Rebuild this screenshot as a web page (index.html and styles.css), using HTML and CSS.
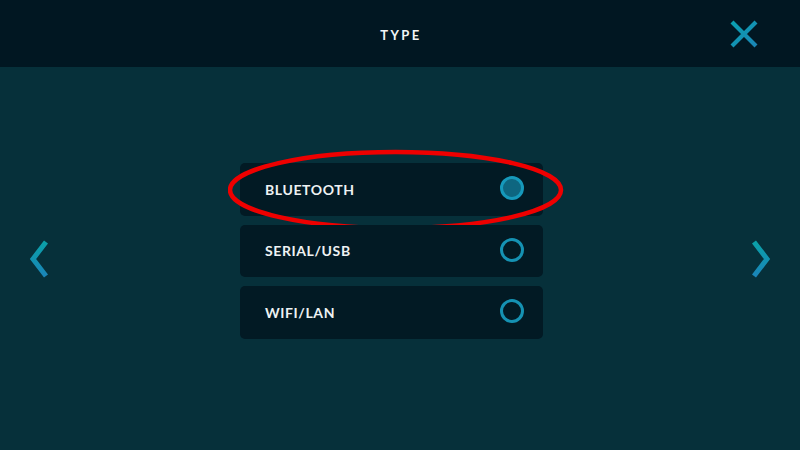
FILE: index.html
```html
<!DOCTYPE html>
<html>
<head>
<meta charset="utf-8">
<link rel="stylesheet" href="styles.css">
</head>
<body>
<div class="app">
  <header class="topbar">
    <div class="title">TYPE</div>
    <button class="close" aria-label="Close">
      <svg width="28" height="28" viewBox="0 0 28 28">
        <defs>
          <linearGradient id="g1" x1="0" y1="0" x2="1" y2="1">
            <stop offset="0" stop-color="#0aa0b0"/>
            <stop offset="1" stop-color="#1a85b5"/>
          </linearGradient>
        </defs>
        <path d="M2 2 L26 26 M26 2 L2 26" stroke="url(#g1)" stroke-width="4.2" fill="none"/>
      </svg>
    </button>
  </header>
  <main class="content">
    <button class="nav" aria-label="Previous">
      <svg width="22" height="38" viewBox="0 0 22 38">
        <defs>
          <linearGradient id="g2" x1="0" y1="0" x2="0" y2="1">
            <stop offset="0" stop-color="#0aa0a8"/>
            <stop offset="1" stop-color="#1a85b8"/>
          </linearGradient>
        </defs>
        <path d="M18 2 L5 19 L18 36" stroke="url(#g2)" stroke-width="5" fill="none"/>
      </svg>
    </button>
    <div class="options">
      <div class="option selected">
        <span class="label">BLUETOOTH</span>
        <span class="radio on"></span>
        <svg class="mark" width="340" height="84" viewBox="0 0 340 84">
          <ellipse cx="167.5" cy="42" rx="165.5" ry="38" fill="none" stroke="#ee0000" stroke-width="4.5"/>
        </svg>
      </div>
      <div class="option">
        <span class="label">SERIAL/USB</span>
        <span class="radio"></span>
      </div>
      <div class="option">
        <span class="label">WIFI/LAN</span>
        <span class="radio"></span>
      </div>
    </div>
    <button class="nav" aria-label="Next">
      <svg width="22" height="38" viewBox="0 0 22 38">
        <defs>
          <linearGradient id="g3" x1="0" y1="0" x2="0" y2="1">
            <stop offset="0" stop-color="#0aa0a8"/>
            <stop offset="1" stop-color="#1a85b8"/>
          </linearGradient>
        </defs>
        <path d="M4 2 L17 19 L4 36" stroke="url(#g3)" stroke-width="5" fill="none"/>
      </svg>
    </button>
  </main>
</div>
</body>
</html>
```
FILE: styles.css
```css
* { box-sizing: border-box; }
html, body { margin: 0; padding: 0; }
body {
  width: 800px;
  height: 450px;
  overflow: hidden;
  background: #06303a;
  font-family: Lato, "Open Sans", sans-serif;
}
.app { display: flex; flex-direction: column; height: 450px; }
.topbar {
  height: 67px;
  flex: none;
  background: #011722;
  display: flex;
  align-items: center;
  justify-content: center;
  position: relative;
}
.title {
  color: #f2f5f6;
  font-weight: 700;
  font-size: 13px;
  letter-spacing: 2.4px;
  padding-left: 2px;
  margin-top: 2px;
}
.close {
  position: absolute;
  right: 42px;
  top: 20px;
  background: none;
  border: 0;
  padding: 0;
  width: 28px;
  height: 28px;
}
.close svg { display: block; }
.content {
  flex: 1;
  display: flex;
  align-items: flex-start;
  justify-content: space-between;
  padding: 0 28px 0 28px;
}
.nav {
  background: none;
  border: 0;
  padding: 0;
  margin-top: 173px;
  width: 22px;
  height: 38px;
}
.nav svg { display: block; }
.options {
  margin-top: 96px;
  margin-right: 17px;
  width: 303px;
  display: flex;
  flex-direction: column;
  gap: 9px;
}
.option {
  position: relative;
  height: 52.5px;
  background: #021a24;
  border-radius: 5px;
  display: flex;
  align-items: center;
  justify-content: space-between;
  padding: 0 19px 0 25px;
}
.label {
  color: #eef2f3;
  font-weight: 700;
  font-size: 14px;
  letter-spacing: 0.6px;
}
.radio {
  width: 24px;
  height: 24px;
  border-radius: 50%;
  border: 3px solid #1592b3;
  margin-bottom: 2px;
}
.radio.on {
  background: #0e6680;
  border-color: #1699bb;
}
.mark {
  position: absolute;
  left: -12px;
  top: -15px;
  pointer-events: none;
}
```
